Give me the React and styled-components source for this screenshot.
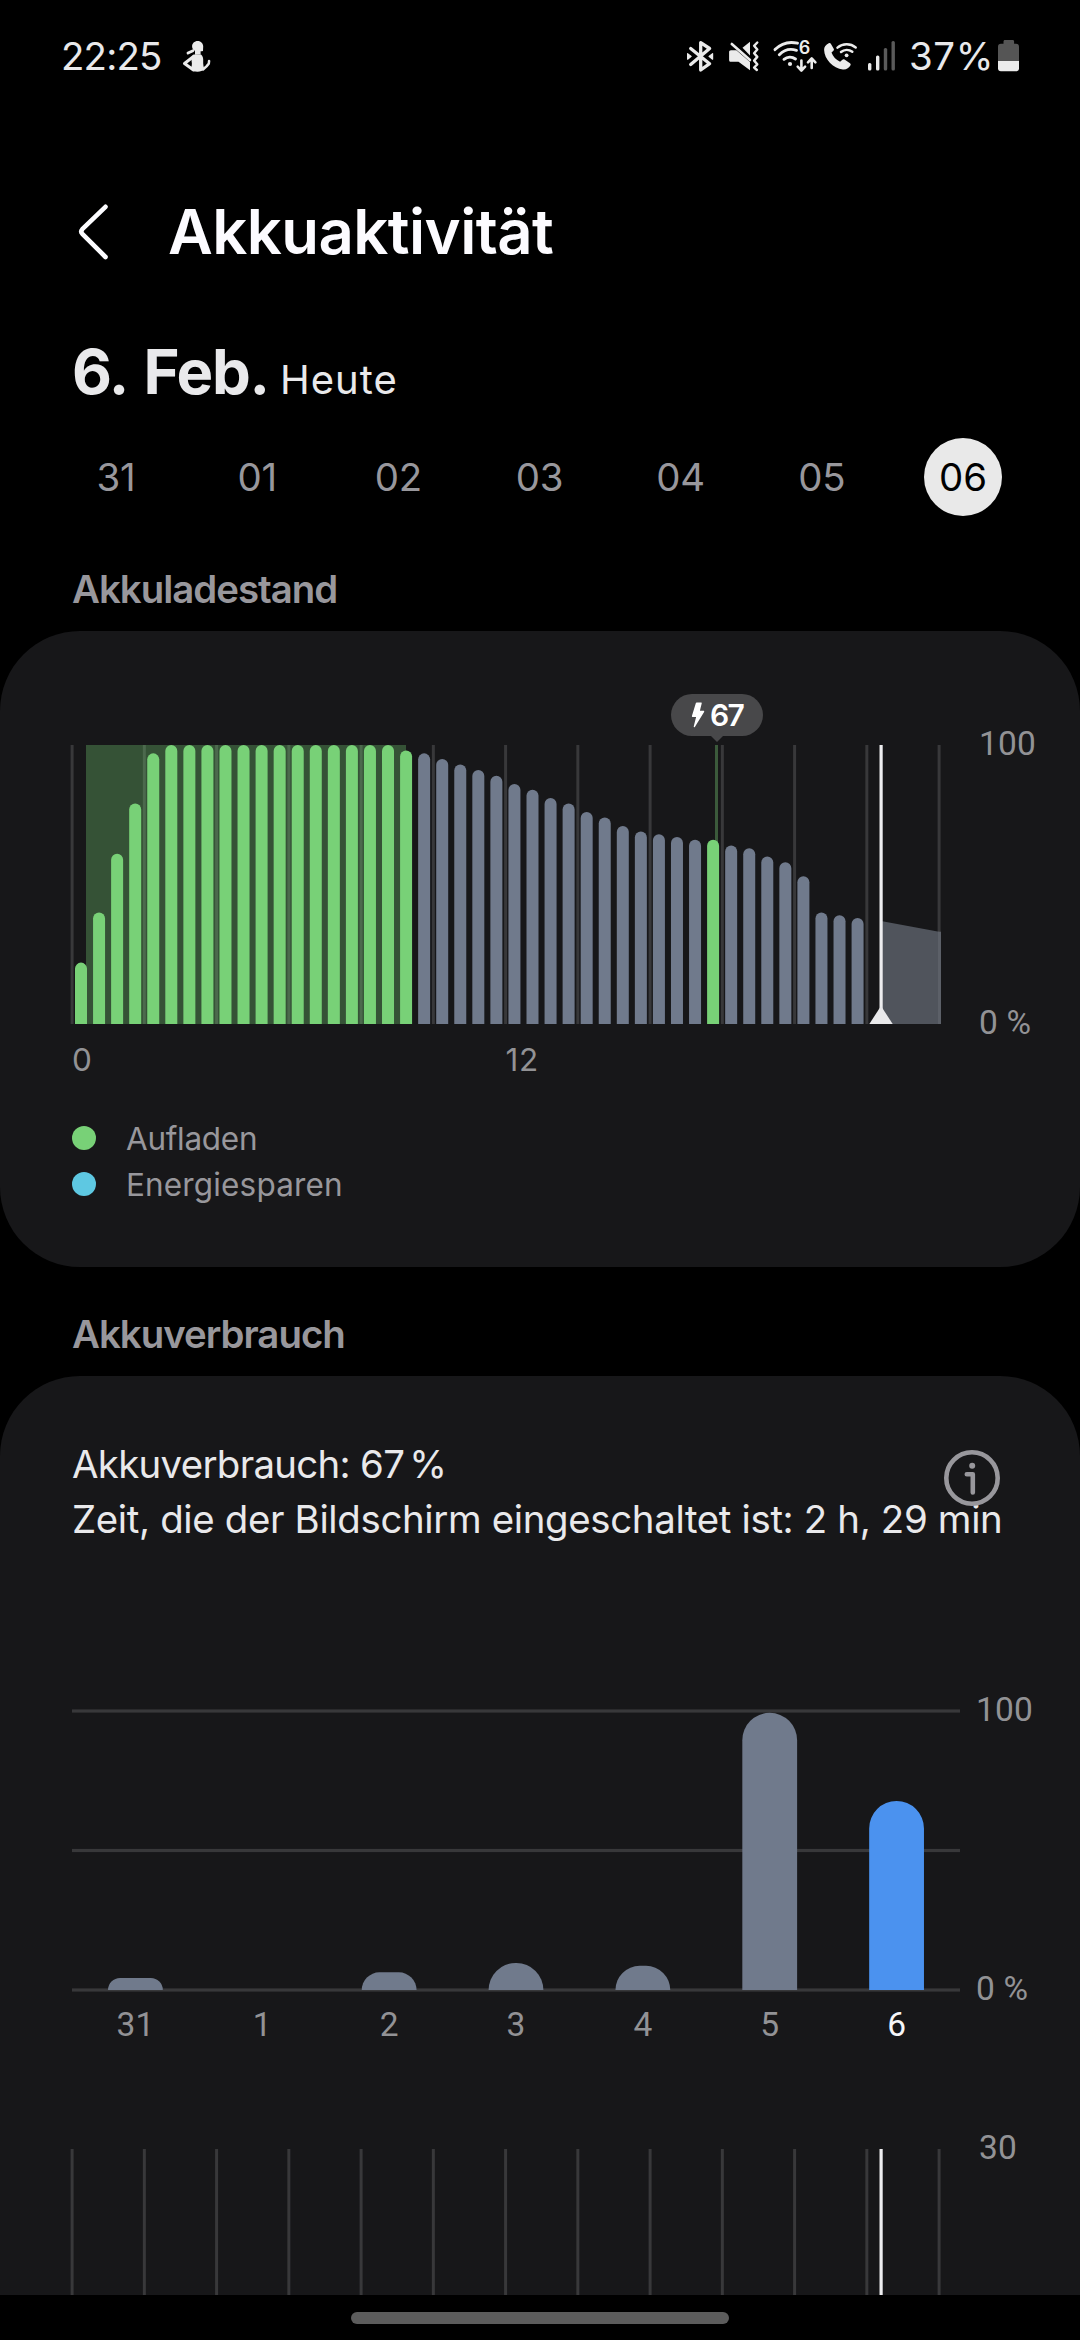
import React from "react";
import styled, { createGlobalStyle } from "styled-components";

const GlobalStyle = createGlobalStyle`
  * { box-sizing: border-box; }
  body { margin: 0; background: #000; }
`;

const color = {
  card: "#171719",
  grid: "#38383a",
  text: "#e9e9eb",
  muted: "#98979c",
  axis: "#929295",
  green: "#78d177",
  slate: "#707a8c",
  blue: "#4b92ef",
  cyan: "#5ec8e2",
};

const Screen = styled.main`
  width: 1080px;
  height: 2340px;
  overflow: hidden;
  display: flex;
  flex-direction: column;
  background: #000;
  color: ${color.text};
  font-family: Inter, Roboto, "Liberation Sans", sans-serif;
  font-kerning: normal;
`;

/* ---------- status bar ---------- */

const StatusBar = styled.div`
  flex: none;
  height: 112px;
  padding: 0 60px 0 61px;
  display: flex;
  align-items: center;
  font-size: 38.4px;
  line-height: 46px;
`;

const Clock = styled.span`
  width: 121px;
  letter-spacing: -0.8px;
`;

const StatusIcons = styled.div`
  margin-left: auto;
  display: flex;
  align-items: center;
`;

const StatusIcon = styled.svg`
  display: block;
  flex: none;
  overflow: visible;
  margin-right: ${(p) => p.$gap || 0}px;
`;

const Percent = styled.span`
  width: 82px;
  margin-right: 7px;
  letter-spacing: 0.6px;
  white-space: nowrap;
`;

const ink = "#ebebeb";

function PersonIcon() {
  return (
    <StatusIcon width="30" height="32" viewBox="182 40 30 32" fill="none" stroke={ink} strokeLinecap="round" strokeLinejoin="round">
      <path d="M197.7 41c3.300 0 5.500 2.500 5.500 5.600 0 1.600-.2 3-.2 4.300-1 .4-1.800.5-2.400.4v3.200l-5.600.2v-4c-2-.9-2.900-2.500-2.900-4.200 0-3.100 2.300-5.500 5.600-5.500z" fill={ink} stroke="none" />
      <path d="M193 50.700l-5 2.400" strokeWidth="2.800" />
      <path d="M193.500 54.500h7.500c1.800 1.500 2.400 3.800 2.200 6.500-.2 3.200.4 5.800 1 8-1.600 1.900-3.600 2.700-6.700 2.700-3.300 0-5.600-1-6.900-2.700 1.300-2.800 1.600-5 1-7.800-.3-2.700 0-5.200 1.900-6.700z" fill={ink} stroke="none" />
      <path d="M193.500 56.500l-9 7 9 6.500" strokeWidth="3" />
      <path d="M203 69.500l3.500-3.200 2.300-2.600 .3-2.800" strokeWidth="2.500" />
    </StatusIcon>
  );
}

function BluetoothIcon() {
  return (
    <StatusIcon $gap={15} width="28" height="32" viewBox="687 40 28 32" fill="none" stroke={ink} strokeWidth="3.300" strokeLinecap="round" strokeLinejoin="round">
      <path d="M691.700 64.500L710.600 48.500 701.700 42.700V70L710.600 63.700 691.700 48.500" />
      <path d="M688.600 53.600l3.600 2.800-3.600 2.800zM713.600 53.600l-3.600 2.800 3.600 2.800z" fill={ink} strokeWidth="1.200" />
    </StatusIcon>
  );
}

function MuteVibrateIcon() {
  return (
    <StatusIcon $gap={14} width="30" height="32" viewBox="730 40 30 32" fill={ink}>
      <path d="M743.500 47.800L751 41.700V55.600z" />
      <path d="M732 50.200h5.400L751 61.900V70.300L739.500 61.800H732c-1.200 0-1.900-.7-1.900-1.900v-7.800c0-1.200.7-1.900 1.900-1.900z" />
      <path d="M732.800 44L751 60" stroke={ink} strokeWidth="2.600" strokeLinecap="round" />
      <path d="M758.300 42.500l-3.200 3.300 3.200 3.700-3.200 3.700 3.200 3.700-3.200 3.700 3.200 3.700-3.200 3.200 2.800 2.500" fill="none" stroke={ink} strokeWidth="2.400" strokeLinecap="round" strokeLinejoin="round" />
    </StatusIcon>
  );
}

const SmallDigit = styled.text`
  font: 600 18px Inter, Roboto, sans-serif;
`;

function WifiIcon() {
  return (
    <StatusIcon $gap={4} width="46" height="32" viewBox="774 40 46 32" fill="none" stroke={ink} strokeWidth="2.900" strokeLinecap="round">
      <path d="M776 49.600A24 24 0 0 1 798.500 43.200" />
      <path d="M780.300 54.700A17 17 0 0 1 797.500 50.300" />
      <path d="M785 59.300A9.500 9.500 0 0 1 796.500 59" />
      <circle cx="791" cy="64" r="2.100" fill={ink} stroke="none" />
      <SmallDigit x="799.800" y="54" fill={ink} stroke="none">6</SmallDigit>
      <path d="M802.400 60.500V70.200M798.700 66.700l3.700 3.900 3.700-3.900M812.700 68V58.600M809 62.300l3.700-3.900 3.700 3.900" strokeWidth="2.600" strokeLinejoin="round" />
    </StatusIcon>
  );
}

function WifiCallIcon() {
  return (
    <StatusIcon $gap={11} width="34" height="32" viewBox="823 40 34 32" fill="none" stroke={ink} strokeLinecap="round">
      <path d="M828.700 43.200c.7-.5 1.500-.3 2 .4l3 5.200c.4.700.3 1.500-.3 2l-1.900 1.700c1.300 4 4.600 7.400 8.600 9.300l2.300-2.100c.6-.6 1.400-.7 2.100-.2l5.500 3.700c.7.500.9 1.400.5 2.100-1.600 2.800-4.400 4.700-7.600 4.200-9.900-1.500-18.600-10.300-18.800-19.800-.1-3 1.800-5 4.600-6.500z" fill={ink} stroke="none" />
      <path d="M837.500 47.600A14.500 14.500 0 0 1 855.700 47.400M841 52A9 9 0 0 1 852.300 51.800" strokeWidth="2.500" />
      <circle cx="846.600" cy="55.300" r="1.900" fill={ink} stroke="none" />
    </StatusIcon>
  );
}

function SignalIcon() {
  return (
    <StatusIcon $gap={13} width="28" height="32" viewBox="868 40 28 32">
      <rect x="868" y="63" width="3.400" height="7.400" rx="1.500" fill={ink} />
      <rect x="876" y="55.500" width="3.400" height="14.900" rx="1.500" fill={ink} />
      <rect x="883.800" y="48" width="3.400" height="22.400" rx="1.500" fill="#5a5a5a" />
      <rect x="891.500" y="41" width="3.400" height="29.400" rx="1.500" fill="#5a5a5a" />
    </StatusIcon>
  );
}

function BatteryIcon() {
  return (
    <StatusIcon width="22" height="32" viewBox="998 40 22 32">
      <path d="M1005 40h7.600c1 0 1.500.6 1.500 1.500V43.800h2c1.900 0 2.900 1 2.900 2.900V61H998V46.700c0-1.900 1-2.900 2.900-2.900h2.600V41.500c0-.9.500-1.500 1.500-1.500z" fill="#555" />
      <path d="M998 61h21v7.300c0 1.900-1 2.900-2.900 2.900h-15.200c-1.900 0-2.900-1-2.900-2.900z" fill={ink} />
    </StatusIcon>
  );
}

/* ---------- header ---------- */

const Header = styled.header`
  flex: none;
  height: 111px;
  margin-top: 64px;
  padding-left: 77px;
  display: flex;
  align-items: center;
`;

const BackButton = styled.button`
  width: 91px;
  padding: 0;
  border: 0;
  background: none;
  display: flex;
`;

const Title = styled.h1`
  margin: 0;
  color: #fcfbff;
  font-size: 61.600px;
  font-weight: 600;
  line-height: 74px;
  letter-spacing: -0.55px;
`;

const DateRow = styled.div`
  flex: none;
  height: 62px;
  margin-top: 54px;
  padding-left: 72px;
  display: flex;
  align-items: baseline;
  line-height: 62px;
`;

const DateText = styled.span`
  width: 208px;
  font-size: 61.600px;
  font-weight: 700;
  letter-spacing: -1.300px;
  word-spacing: 4px;
  white-space: nowrap;
`;

const TodayText = styled.span`
  font-size: 40px;
  letter-spacing: 1px;
`;

const DayStrip = styled.nav`
  flex: none;
  margin-top: 35px;
  padding: 0 78px 0 77px;
  display: flex;
  justify-content: space-between;
`;

const Day = styled.button`
  width: 78px;
  height: 78px;
  padding: 0;
  border: 0;
  border-radius: 50%;
  background: ${(p) => (p.$selected ? "#e9e9e9" : "transparent")};
  color: ${(p) => (p.$selected ? "#000" : color.muted)};
  font: inherit;
  font-size: 38.400px;
  line-height: 78px;
  letter-spacing: -0.2px;
  text-align: center;
`;

const SectionTitle = styled.h2`
  flex: none;
  margin: ${(p) => p.$top}px 0 22px 72px;
  color: ${color.muted};
  font-size: 38.400px;
  font-weight: 600;
  line-height: 40px;
  letter-spacing: -1px;
`;

/* ---------- cards ---------- */

const Card = styled.section`
  position: relative;
  flex: none;
  background: ${color.card};
  border-radius: ${(p) => (p.$cut ? "80px 80px 0 0" : "80px")};
  height: ${(p) => p.$height}px;
  padding: ${(p) => p.$padTop}px 0 0 70px;
  overflow: hidden;
`;

const PlotRow = styled.div`
  display: flex;
  margin: ${(p) => p.$top || 0}px 0 0 ${(p) => p.$indent || 0}px;
`;

const Plot = styled.svg`
  display: block;
  flex: none;
`;

const AxisLabels = styled.div`
  height: 313px;
  margin: ${(p) => p.$lift}px 0 -20px ${(p) => p.$gap}px;
  display: flex;
  flex-direction: column;
  justify-content: space-between;
  color: ${color.axis};
  font: 33.500px/34px Roboto, sans-serif;
  letter-spacing: 0.2px;
`;

const HourAxis = styled.div`
  width: 867px;
  margin: 20px 0 0 2px;
  display: grid;
  grid-template-columns: 1fr 1fr;
  color: ${color.axis};
  font-size: 31.500px;
  line-height: 32px;
  letter-spacing: 0.8px;
`;

const Legend = styled.ul`
  margin: 39px 0 0 2px;
  padding: 0;
  list-style: none;
`;

const LegendItem = styled.li`
  height: 46px;
  display: flex;
  align-items: center;
  color: ${color.muted};
  font-size: 31.500px;
  letter-spacing: ${(p) => p.$tracking}px;
`;

const Dot = styled.span`
  width: 24px;
  height: 24px;
  margin-right: 30px;
  border-radius: 50%;
  background: ${(p) => p.$fill};
`;

const Tooltip = styled.div`
  position: absolute;
  left: 671px;
  top: 63px;
  width: 92px;
  height: 42px;
  border-radius: 21px;
  background: #48484a;
  color: #fff;
  display: flex;
  align-items: center;
  padding-left: 20px;
  font-size: 30px;
  font-weight: 600;
  letter-spacing: -1.600px;

  &::after {
    content: "";
    position: absolute;
    left: 40px;
    top: 42px;
    border: 6px solid transparent;
    border-top-color: #48484a;
    border-bottom: 0;
  }
`;

const Bolt = styled.svg`
  display: block;
  margin: 0 5px 0 0;
`;

const Summary = styled.p`
  margin: 0 0 0 2px;
  font-size: 38.400px;
  line-height: 55px;
  white-space: nowrap;
  letter-spacing: ${(p) => p.$tracking}px;
`;

const Unit = styled.span`
  margin-left: 5px;
`;

const InfoButton = styled.button`
  position: absolute;
  left: 943px;
  top: 73px;
  padding: 0;
  border: 0;
  background: none;
  display: flex;
`;

const DayAxis = styled.div`
  width: 888px;
  margin: 16px 0 0 2px;
  display: grid;
  grid-template-columns: repeat(7, 1fr);
  font: 33.500px/34px Roboto, sans-serif;
  text-align: center;
`;

const DayLabel = styled.span`
  color: ${(p) => (p.$active ? "#f6f6f8" : color.axis)};
`;

const NavBar = styled.div`
  flex: none;
  height: 45px;
  display: flex;
  align-items: center;
  justify-content: center;
  background: #000;
`;

const HomePill = styled.div`
  width: 378px;
  height: 12px;
  border-radius: 6px;
  background: #5c5c5c;
`;

/* ---------- charts ---------- */

const HEIGHT = 279;
const LEVELS = [
  22, 40, 61, 79, 97, 100, 100, 100, 100, 100, 100, 100, 100, 100, 100, 100, 100, 100, 98,
  97, 95, 93, 91, 89, 86, 84, 81, 79, 76, 74, 71, 69, 68, 67, 66, 66, 64, 63, 60, 58, 53, 40, 39, 38,
];
const isCharging = (i) => i < 19 || i === 35;
const gridX = Array.from({ length: 13 }, (_, i) => 0.6 + i * 72.25);

function topRounded(x, y, w, bottom, r) {
  return `M${x} ${bottom}V${y + r}a${r} ${r} 0 0 1 ${r} ${-r}h${w - 2 * r}a${r} ${r} 0 0 1 ${r} ${r}V${bottom}z`;
}

function LevelChart() {
  return (
    <Plot width="872" height={HEIGHT} viewBox={`0 0 872 ${HEIGHT}`}>
      {gridX.map((x) => (
        <rect key={x} x={x} y="0" width="3" height={HEIGHT} fill={color.grid} />
      ))}
      <rect x="16" y="0" width="320" height={HEIGHT} fill="#77d176" fillOpacity="0.320" />
      <rect x="645" y="0" width="3" height={HEIGHT} fill="#3b5a3b" />
      <path d="M811 176L869 186.700V279H811z" fill="#50545c" />
      <rect x="868" y="186.700" width="3" height="93" fill="#5c6068" />
      {LEVELS.map((v, i) => (
        <path
          key={i}
          d={topRounded(5 + i * 18.060, HEIGHT * (1 - v / 100), 12, HEIGHT, 6)}
          fill={isCharging(i) ? color.green : color.slate}
        />
      ))}
      <rect x="809.500" y="0" width="3.200" height={HEIGHT} fill="#ededef" />
      <path d="M811 261L822.700 279H799.300z" fill="#e9e9eb" />
    </Plot>
  );
}

const USAGE = [
  { day: "31", h: 12 },
  { day: "1", h: 0 },
  { day: "2", h: 17.700 },
  { day: "3", h: 27 },
  { day: "4", h: 24.200 },
  { day: "5", h: 277.200 },
  { day: "6", h: 189, active: true },
];

function UsageChart() {
  const step = 888 / 7;
  return (
    <Plot width="888" height="283" viewBox="0 0 888 283">
      {[0.5, 140, 279.500].map((y) => (
        <rect key={y} x="0" y={y - 0.100} width="888" height="3.200" fill={color.grid} />
      ))}
      {USAGE.filter((d) => d.h > 0).map((d) => {
        const i = USAGE.indexOf(d);
        return (
          <path
            key={d.day}
            d={topRounded(step * (i + 0.5) - 27.400, 281 - d.h, 54.800, 281, Math.min(27.400, d.h))}
            fill={d.active ? color.blue : color.slate}
          />
        );
      })}
    </Plot>
  );
}

function HourlyChart() {
  return (
    <Plot width="872" height="146" viewBox="0 0 872 146">
      {gridX.map((x) => (
        <rect key={x} x={x} y="0" width="3" height="146" fill={color.grid} />
      ))}
      <rect x="809.500" y="0" width="3.200" height="146" fill="#ededef" />
    </Plot>
  );
}

export default function App() {
  return (
    <Screen>
      <GlobalStyle />
      <StatusBar>
        <Clock>22:25</Clock>
        <PersonIcon />
        <StatusIcons>
          <BluetoothIcon />
          <MuteVibrateIcon />
          <WifiIcon />
          <WifiCallIcon />
          <SignalIcon />
          <Percent>37%</Percent>
          <BatteryIcon />
        </StatusIcons>
      </StatusBar>

      <Header>
        <BackButton aria-label="Zurück">
          <svg width="34" height="60" viewBox="77 201 34 60" fill="none" stroke="#fcfcff" strokeWidth="4.600" strokeLinecap="round" strokeLinejoin="round">
            <path d="M105.500 205.800L82.300 228.200Q80.200 230.500 82.300 232.800L105.500 256" />
          </svg>
        </BackButton>
        <Title>Akkuaktivität</Title>
      </Header>

      <DateRow>
        <DateText>6. Feb.</DateText>
        <TodayText>Heute</TodayText>
      </DateRow>

      <DayStrip>
        {["31", "01", "02", "03", "04", "05", "06"].map((d) => (
          <Day key={d} $selected={d === "06"}>{d}</Day>
        ))}
      </DayStrip>

      <SectionTitle $top={53}>Akkuladestand</SectionTitle>
      <Card $height={636} $padTop={114}>
        <PlotRow>
          <LevelChart />
          <AxisLabels $gap={37} $lift={-18}>
            <span>100</span>
            <span>0 %</span>
          </AxisLabels>
        </PlotRow>
        <HourAxis>
          <span>0</span>
          <span>12</span>
        </HourAxis>
        <Legend>
          <LegendItem $tracking={-0.300}><Dot $fill={color.green} />Aufladen</LegendItem>
          <LegendItem $tracking={0.150}><Dot $fill={color.cyan} />Energiesparen</LegendItem>
        </Legend>
        <Tooltip>
          <Bolt width="14" height="26" viewBox="0 0 14 26" fill="#fff">
            <path d="M4.800 1.200Q5 .6 5.700 .6H10.200Q11 .6 10.700 1.400L8.900 8.800H12.600Q13.600 8.900 13.100 9.900L4 24.800Q3 26 2.700 24.600L5.100 15H1.600Q.7 14.900 .9 13.900z" />
          </Bolt>
          67
        </Tooltip>
      </Card>

      <SectionTitle $top={47}>Akkuverbrauch</SectionTitle>
      <Card $cut $height={919} $padTop={61}>
        <InfoButton aria-label="Info">
          <svg width="58" height="58" viewBox="0 0 58 58" fill="none" stroke={color.muted} strokeWidth="4.600" strokeLinecap="round" strokeLinejoin="round">
            <circle cx="29" cy="29" r="25.700" />
            <path d="M23.800 25.300H29.800V43.500" />
            <circle cx="29.200" cy="16.800" r="3" fill={color.muted} stroke="none" />
          </svg>
        </InfoButton>
        <Summary $tracking={-0.680}>Akkuverbrauch: 67<Unit>%</Unit></Summary>
        <Summary $tracking={-0.340}>Zeit, die der Bildschirm eingeschaltet ist: 2 h, 29 min</Summary>
        <PlotRow $top={162} $indent={2}>
          <UsageChart />
          <AxisLabels $gap={16} $lift={-16}>
            <span>100</span>
            <span>0 %</span>
          </AxisLabels>
        </PlotRow>
        <DayAxis>
          {USAGE.map((d) => (
            <DayLabel key={d.day} $active={d.active}>{d.day}</DayLabel>
          ))}
        </DayAxis>
        <PlotRow $top={107}>
          <HourlyChart />
          <AxisLabels $gap={37} $lift={-18}>
            <span>30</span>
          </AxisLabels>
        </PlotRow>
      </Card>

      <NavBar>
        <HomePill />
      </NavBar>
    </Screen>
  );
}
